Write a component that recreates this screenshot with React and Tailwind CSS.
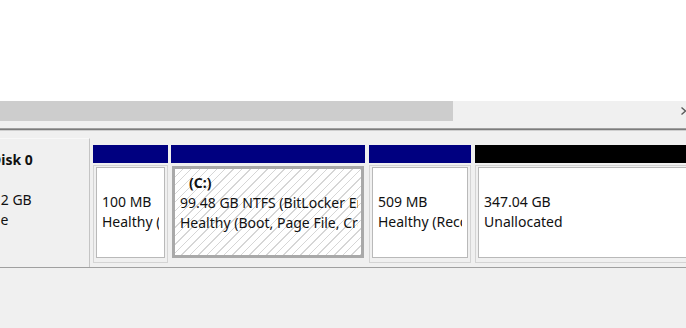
import React from 'react'

const font = { fontFamily: '"Noto Sans", "Open Sans", sans-serif' }

function Partition({ bar, width, label, size, status, selected }) {
    return (
        <div className={`flex flex-col shrink-0 ${width}`}>
            <div className={`h-[18px] ${bar}`} />
            {selected ? (
                <div className="mt-[3px] mx-px h-[92px] border-[3px] border-[#a9a9a9] bg-[repeating-linear-gradient(135deg,#ffffff_0px,#ffffff_5px,#d6d6d6_5px,#d6d6d6_6px)] pr-[3px] flex overflow-hidden">
                    <div className="flex-1 min-w-0 overflow-hidden pt-[4px] pl-[5px] leading-[20px] text-[14px] text-[#111] whitespace-nowrap">
                        <div className="ml-[9px] font-bold">{label}</div>
                        <div>{size}</div>
                        <div>{status}</div>
                    </div>
                </div>
            ) : (
                <div className="mt-[2px] h-[98px] border border-[#d4d4d4] bg-[#f0f0f0] px-[2px] pt-px pb-[4px] flex overflow-hidden">
                    <div className="flex-1 min-w-0 border border-[#b9b9b9] bg-white pr-[5px] flex overflow-hidden">
                        <div className="flex-1 min-w-0 overflow-hidden pt-[4px] pl-[5px] leading-[20px] text-[14px] text-[#111] whitespace-nowrap">
                            <div className="h-[20px]">{label}</div>
                            <div>{size}</div>
                            <div>{status}</div>
                        </div>
                    </div>
                </div>
            )}
        </div>
    )
}

export default function App() {
    return (
        <div className="w-[686px] h-[328px] overflow-hidden bg-[#f0f0f0] flex flex-col" style={font}>
            <div className="h-[101px] bg-white shrink-0" />

            {/* horizontal scrollbar */}
            <div className="h-[20px] flex shrink-0">
                <div className="w-[453px] bg-[#cdcdcd]" />
                <div className="flex-1 bg-[#f0f0f0] flex items-center justify-end">
                    <div className="w-[6px] overflow-hidden">
                        <svg width="9" height="10" viewBox="0 0 9 10">
                            <path d="M1.5 1.5 L5.5 5 L1.5 8.5" fill="none" stroke="#5a5a5a" strokeWidth="1.4" />
                        </svg>
                    </div>
                </div>
            </div>

            <div className="h-[7px] shrink-0" />
            <div className="h-px bg-[#a0a0a0] shrink-0" />
            <div className="h-px bg-[#7c7c7c] shrink-0" />
            <div className="h-px bg-[#cfcfcf] shrink-0" />
            <div className="h-[7px] shrink-0" />

            {/* disk row */}
            <div className="h-[130px] flex border-b border-[#a0a0a0] shrink-0">
                <div className="w-[90px] shrink-0 bg-[#f0f0f0] border-t border-[#f8f8f8] border-r border-r-[#c4c4c4] overflow-hidden text-[14px] leading-[20px] text-[#111] whitespace-nowrap">
                    <div className="pt-[11px] ml-[-35px]">
                        <div className="ml-[26px] font-bold">Disk 0</div>
                        <div>Basic</div>
                        <div>447.12 GB</div>
                        <div>Online</div>
                    </div>
                </div>
                <div className="flex-1 flex pt-[7px] pl-[3px] overflow-hidden">
                    <Partition bar="bg-[#000080]" width="w-[75px]" label="" size="100 MB" status="Healthy (EFI System Partition)" />
                    <div className="w-[3px] shrink-0" />
                    <Partition bar="bg-[#000080]" width="w-[194px]" label="(C:)" size="99.48 GB NTFS (BitLocker Encrypted)" status="Healthy (Boot, Page File, Crash Dump, Basic Data Partition)" selected />
                    <div className="w-[4px] shrink-0" />
                    <Partition bar="bg-[#000080]" width="w-[102px]" label="" size="509 MB" status="Healthy (Recovery Partition)" />
                    <div className="w-[4px] shrink-0" />
                    <Partition bar="bg-black" width="w-[240px]" label="" size="347.04 GB" status="Unallocated" />
                </div>
            </div>
        </div>
    )
}
